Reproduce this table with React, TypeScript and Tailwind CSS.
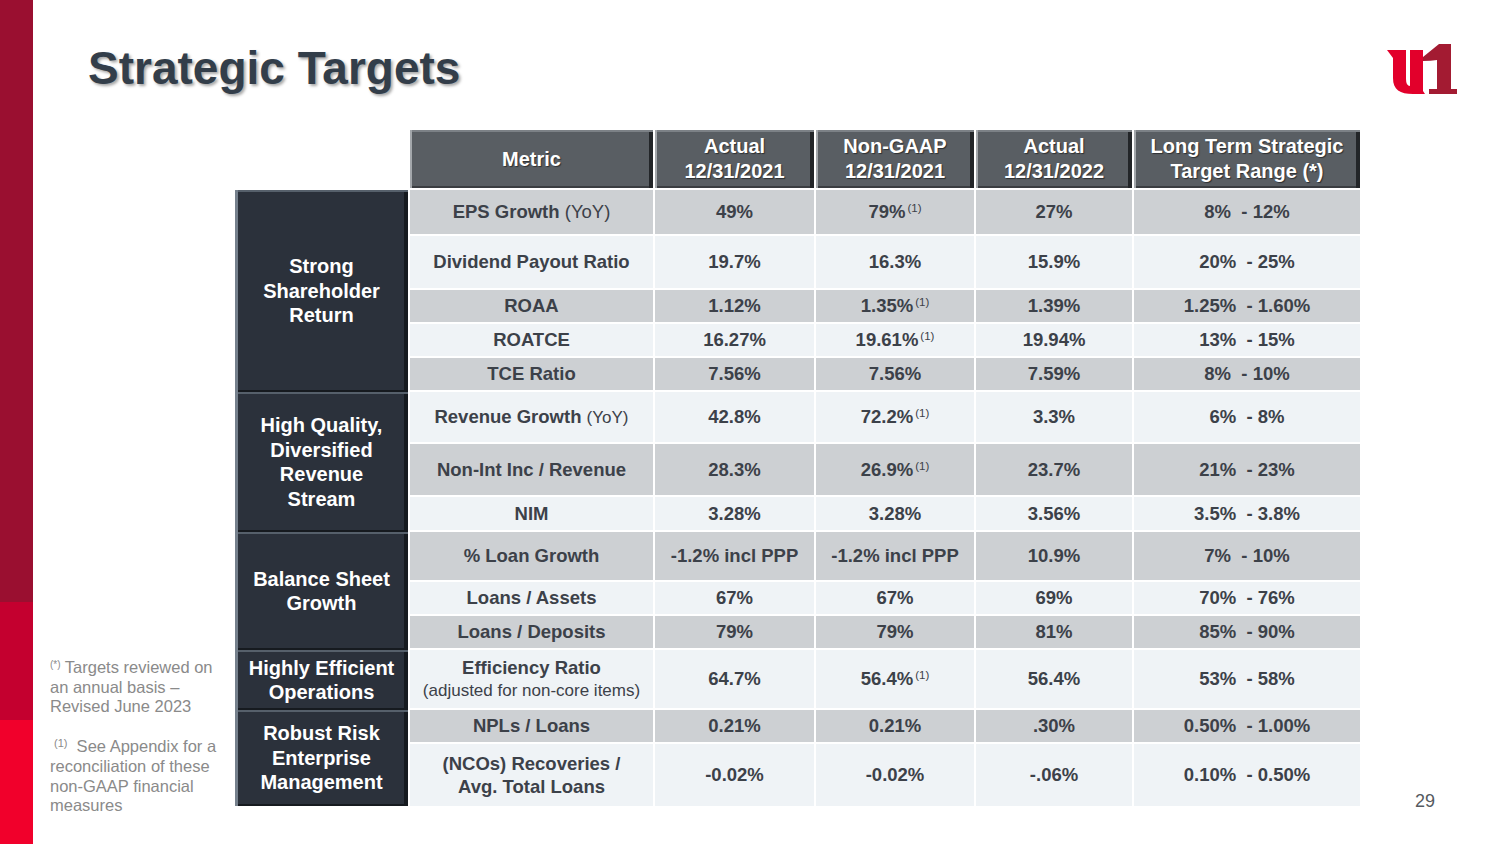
import React from "react";

type Row = {
  metric: React.ReactNode;
  vals: [React.ReactNode, React.ReactNode, React.ReactNode, string];
  shade: "g" | "l";
};

const Sup = () => <sup className="relative -top-[6px] ml-[2px] text-[11.5px] font-normal">(1)</sup>;

const rows: Row[] = [
  {
    metric: (
      <span>
        EPS Growth <span className="font-normal">(YoY)</span>
      </span>
    ),
    vals: [<span>49%</span>, <span>79%<Sup /></span>, <span>27%</span>, "8%  - 12%"],
    shade: "g",
  },
  { metric: "Dividend Payout Ratio", vals: ["19.7%", "16.3%", "15.9%", "20%  - 25%"], shade: "l" },
  { metric: "ROAA", vals: ["1.12%", <span>1.35%<Sup /></span>, "1.39%", "1.25%  - 1.60%"], shade: "g" },
  { metric: "ROATCE", vals: ["16.27%", <span>19.61%<Sup /></span>, "19.94%", "13%  - 15%"], shade: "l" },
  { metric: "TCE Ratio", vals: ["7.56%", "7.56%", "7.59%", "8%  - 10%"], shade: "g" },
  {
    metric: (
      <span>
        Revenue Growth <span className="text-[17px] font-normal">(YoY)</span>
      </span>
    ),
    vals: ["42.8%", <span>72.2%<Sup /></span>, "3.3%", "6%  - 8%"],
    shade: "l",
  },
  { metric: "Non-Int Inc / Revenue", vals: ["28.3%", <span>26.9%<Sup /></span>, "23.7%", "21%  - 23%"], shade: "g" },
  { metric: "NIM", vals: ["3.28%", "3.28%", "3.56%", "3.5%  - 3.8%"], shade: "l" },
  { metric: "% Loan Growth", vals: ["-1.2% incl PPP", "-1.2% incl PPP", "10.9%", "7%  - 10%"], shade: "g" },
  { metric: "Loans / Assets", vals: ["67%", "67%", "69%", "70%  - 76%"], shade: "l" },
  { metric: "Loans / Deposits", vals: ["79%", "79%", "81%", "85%  - 90%"], shade: "g" },
  {
    metric: (
      <div className="leading-[22px]">
        Efficiency Ratio
        <br />
        <span className="text-[17px] font-normal">(adjusted for non-core items)</span>
      </div>
    ),
    vals: ["64.7%", <span>56.4%<Sup /></span>, "56.4%", "53%  - 58%"],
    shade: "l",
  },
  { metric: "NPLs / Loans", vals: ["0.21%", "0.21%", ".30%", "0.50%  - 1.00%"], shade: "g" },
  {
    metric: (
      <div className="leading-[23px]">
        (NCOs) Recoveries /
        <br />
        Avg. Total Loans
      </div>
    ),
    vals: ["-0.02%", "-0.02%", "-.06%", "0.10%  - 0.50%"],
    shade: "l",
  },
];

// category cell starts before these row indexes
const categories: Record<number, { label: string[]; span: string; last?: boolean }> = {
  0: { label: ["Strong", "Shareholder", "Return"], span: "row-span-5" },
  5: { label: ["High Quality,", "Diversified", "Revenue", "Stream"], span: "row-span-3" },
  8: { label: ["Balance Sheet", "Growth"], span: "row-span-3" },
  11: { label: ["Highly Efficient", "Operations"], span: "row-span-1" },
  12: { label: ["Robust Risk", "Enterprise", "Management"], span: "row-span-2", last: true },
};

const headers: string[][] = [
  ["Metric"],
  ["Actual", "12/31/2021"],
  ["Non-GAAP", "12/31/2021"],
  ["Actual", "12/31/2022"],
  ["Long Term Strategic", "Target Range (*)"],
];

function Logo() {
  return (
    <svg width="75" height="55" viewBox="0 0 75 55">
      <path
        d="M2 8 H21 V37 Q21 44 25 44 V8 H38 V49 L40 52 H28 C15 52 8 48 8 36 V16 Z"
        fill="#e2002b"
      />
      <path d="M38 15 L54 2 H66 V47 H72 V52 H44 V47 H52 V18 Q46 19 38 19 Z" fill="#a31b32" />
    </svg>
  );
}

export default function App() {
  return (
    <div className="flex h-[844px] w-[1500px] overflow-hidden bg-white font-['Liberation_Sans',Arial,sans-serif]">
      {/* brand bar */}
      <div className="flex w-[33px] flex-col">
        <div className="h-[602px] bg-[#9a0f30]" />
        <div className="h-[118px] bg-[#c4002f]" />
        <div className="flex-1 bg-[#f1002b]" />
      </div>

      <div className="flex flex-1 flex-col">
        {/* title row */}
        <div className="flex h-[130px] items-start justify-between">
          <h1 className="pl-[55px] pt-[40px] text-[46px] font-bold leading-[56px] text-[#333e4a] [text-shadow:2px_2px_3px_rgba(0,0,0,0.35)]">
            Strategic Targets
          </h1>
          <div className="mr-[40px] mt-[42px]">
            <Logo />
          </div>
        </div>

        <div className="flex flex-1">
          {/* footnotes */}
          <div className="flex w-[202px] flex-col justify-end pb-[28px] pl-[17px] text-[16.5px] leading-[19.7px] text-[#8a8a8a]">
            <p>
              <sup className="text-[10px]">(*)</sup> Targets reviewed on
              <br />
              an annual basis –
              <br />
              Revised June 2023
            </p>
            <p className="mt-[20px]">
              <sup className="ml-[4px] text-[11px]">(1)</sup>&nbsp; See Appendix for a
              <br />
              reconciliation of these
              <br />
              non-GAAP financial
              <br />
              measures
            </p>
          </div>

          {/* table */}
          <div className="grid grid-cols-[173px_243px_159px_158px_156px_226px] grid-rows-[58px_44px_52px_32px_32px_32px_50px_51px_33px_48px_32px_32px_58px_32px_62px] gap-[2px] self-start">
            <div />
            {headers.map((h, i) => (
              <div
                key={i}
                className="flex flex-col items-center justify-center bg-[#595e63] text-center text-[20px] font-bold leading-[25px] text-white shadow-[inset_2px_0_0_#a3a7ab,inset_0_2px_0_#7c8186,inset_-4px_0_0_#222528,inset_0_-2px_0_#3a3d41] [text-shadow:1px_1px_1px_rgba(0,0,0,0.5)]"
              >
                {h.map((l) => (
                  <span key={l}>{l}</span>
                ))}
              </div>
            ))}

            {rows.map((r, i) => {
              const cat = categories[i];
              const bg = r.shade === "g" ? "bg-[#cdd0d3]" : "bg-[#eff3f6]";
              return (
                <React.Fragment key={i}>
                  {cat && (
                    <div
                      className={`${cat.span} ${cat.last ? "" : "mb-[-2px]"} col-start-1 flex flex-col items-center justify-center bg-[#2b313b] text-center text-[20px] font-bold leading-[24.5px] text-white shadow-[inset_3px_0_0_#75808c,inset_0_2px_0_#56606b,inset_-4px_0_0_#161a1f,inset_0_-2px_0_#161a1f]`}
                    >
                      {cat.label.map((l) => (
                        <span key={l}>{l}</span>
                      ))}
                    </div>
                  )}
                  <div className={`${bg} flex items-center justify-center text-center text-[18.5px] font-bold text-[#3c4149]`}>
                    {r.metric}
                  </div>
                  {r.vals.map((v, j) => (
                    <div
                      key={j}
                      className={`${bg} flex items-center justify-center whitespace-pre text-[18.5px] font-bold text-[#3c4149]`}
                    >
                      {v}
                    </div>
                  ))}
                </React.Fragment>
              );
            })}
          </div>

          {/* page number */}
          <div className="flex flex-1 items-end justify-end pb-[29px] pr-[65px] text-[18px] text-[#555a60]">
            29
          </div>
        </div>
      </div>
    </div>
  );
}
